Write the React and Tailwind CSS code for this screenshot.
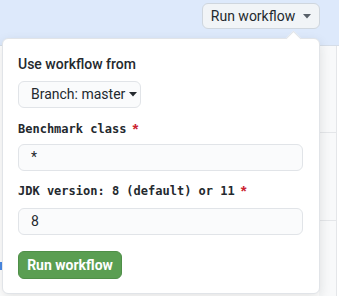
function Caret({ className }) {
    return (
        <svg width="8" height="5" viewBox="0 0 8 5" className={className}>
            <path d="M0 0 L8 0 L4 4.5 Z" fill="currentColor" />
        </svg>
    );
}

function Label({ children }) {
    return (
        <div className="h-[20px] flex items-center whitespace-nowrap text-[12px] font-bold text-[#24292e] font-['DejaVu_Sans_Mono',monospace]">
            {children}
            <span className="ml-[6px] text-[15px] text-[#cb2431] font-['Liberation_Sans',sans-serif]">
                *
            </span>
        </div>
    );
}

function Field({ value }) {
    return (
        <div className="h-[27px] w-[285px] flex items-center px-[12px] bg-[#fafbfc] border border-[#e1e4e8] rounded-md text-[14px] text-[#24292e]">
            {value}
        </div>
    );
}

export default function App() {
    return (
        <div className="relative w-[339px] h-[296px] overflow-hidden bg-white font-['Roboto',sans-serif]">
            {/* page behind */}
            <div className="h-[46px] bg-[#dde9fb] border-b border-[#d5dde8] flex justify-end pr-[19px] pt-[3px]">
                <button className="h-[26px] w-[118px] flex items-center justify-center gap-[8px] whitespace-nowrap bg-[#f1f4f7] border border-[#cfd6de] rounded-md text-[14px] text-[#24292e]">
                    Run workflow
                    <Caret className="text-[#586069]" />
                </button>
            </div>
            <div className="flex h-[250px]">
                <div className="flex-1 flex flex-col justify-end pb-[26px]">
                    <div className="w-[2px] h-[8px] bg-[#4a8ae6]" />
                </div>
                <div className="w-[18px] bg-[#f8f9fa] border-r border-[#e4e6e9] flex flex-col">
                    <div className="h-[87px] border-b border-[#e4e6e9]" />
                    <div className="h-[88px] border-b border-[#e4e6e9]" />
                </div>
                <div className="w-[2px]" />
            </div>

            {/* dropdown */}
            <div className="absolute left-[2px] top-[38px] w-[318px] h-[256px] bg-white border border-[#e1e4e8] rounded-md shadow-[0_4px_12px_rgba(27,31,35,0.12)] pl-[15px] pt-[15px]">
                <div className="absolute -top-[6px] left-[285px] w-[11px] h-[11px] bg-white border-l border-t border-[#e1e4e8] rotate-45" />
                <div className="relative">
                    <div className="h-[20px] flex items-center whitespace-nowrap text-[14px] font-medium text-[#24292e]">
                        Use workflow from
                    </div>
                    <button className="mt-[7px] h-[27px] w-[123px] flex items-center pl-[12px] gap-[4px] whitespace-nowrap bg-[#fafbfc] border border-[#e1e4e8] rounded-md text-[14px] text-[#24292e]">
                        Branch: master
                        <Caret className="text-[#24292e]" />
                    </button>
                    <div className="mt-[11px]">
                        <Label>Benchmark class</Label>
                    </div>
                    <div className="mt-[5px]">
                        <Field value="*" />
                    </div>
                    <div className="mt-[10px]">
                        <Label>JDK version: 8 (default) or 11</Label>
                    </div>
                    <div className="mt-[7px]">
                        <Field value="8" />
                    </div>
                    <button className="mt-[16px] h-[28px] w-[104px] flex items-center justify-center whitespace-nowrap bg-[#5a9e52] border border-[#4f8f48] rounded-md text-[14px] font-bold text-white">
                        Run workflow
                    </button>
                </div>
            </div>
        </div>
    );
}
